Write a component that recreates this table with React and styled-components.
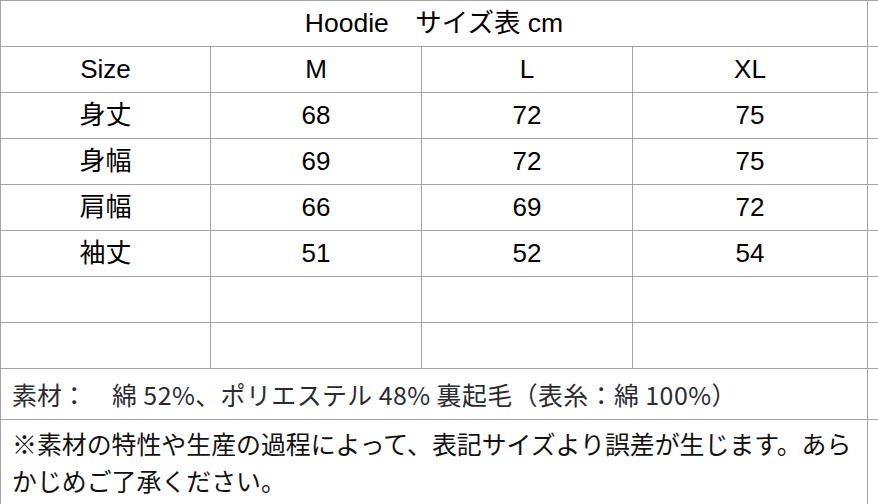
import React from "react";
import styled, { createGlobalStyle } from "styled-components";

const Global = createGlobalStyle`
  html, body { margin: 0; padding: 0; background: #ffffff; }
  body { overflow: hidden; }
  #root { width: 878px; height: 504px; overflow: hidden; }
`;

const LINE = "#a4a4a4";

const Sheet = styled.div`
  display: grid;
  grid-template-columns: 210px 211px 211px 235px 60px;
  grid-template-rows: repeat(8, 46px) 51px 85px 46px;
  border-top: 1px solid ${LINE};
  border-left: 1px solid ${LINE};
  width: max-content;
  box-sizing: border-box;
  font-family: "Liberation Sans", "Noto Sans CJK JP", sans-serif;
  color: #000;
`;

const Cell = styled.div`
  box-sizing: border-box;
  border-right: 1px solid ${LINE};
  border-bottom: 1px solid ${LINE};
  display: flex;
  align-items: center;
  justify-content: center;
  font-size: 26px;
  line-height: 1;
  padding-bottom: 2px;
  grid-column: ${(p) => (p.$span ? `span ${p.$span}` : "auto")};
`;

const Spare = styled.div`
  box-sizing: border-box;
  border-bottom: 1px solid ${LINE};
`;

const Title = styled(Cell)`
  font-size: 26.5px;
  padding-bottom: 0;
`;

const NoteCell = styled.div`
  box-sizing: border-box;
  grid-column: span 4;
  border-right: 1px solid ${LINE};
  border-bottom: 1px solid ${LINE};
  display: flex;
  flex-direction: column;
  justify-content: center;
  padding: 0 0 0 11px;
  font-family: "Noto Sans CJK JP", sans-serif;
  font-size: 24.9px;
  line-height: 37px;
  white-space: nowrap;
  letter-spacing: ${(p) => p.$spacing || "0"};
  color: ${(p) => p.$color || "#111"};
`;

const Label = styled.span`
  display: inline-block;
  width: 100px;
  letter-spacing: 0;
`;

const sizes = ["M", "L", "XL"];
const rows = [
  ["身丈", "68", "72", "75"],
  ["身幅", "69", "72", "75"],
  ["肩幅", "66", "69", "72"],
  ["袖丈", "51", "52", "54"],
  ["", "", "", ""],
  ["", "", "", ""],
];

export default function App() {
  return (
    <>
      <Global />
      <Sheet>
        <Title $span={4}>Hoodie　サイズ表 cm</Title>
        <Spare />
        <Cell>Size</Cell>
        {sizes.map((s) => (
          <Cell key={s}>{s}</Cell>
        ))}
        <Spare />
        {rows.map((r, i) => (
          <React.Fragment key={i}>
            {r.map((v, j) => (
              <Cell key={j}>{v}</Cell>
            ))}
            <Spare />
          </React.Fragment>
        ))}
        <NoteCell $color="#2b2b33" $spacing="0.45px">
          <div>
            <Label>素材：</Label>綿 52%、ポリエステル 48% 裏起毛（表糸：綿 100%）
          </div>
        </NoteCell>
        <Spare />
        <NoteCell>
          <div>※素材の特性や生産の過程によって、表記サイズより誤差が生じます。あら</div>
          <div>かじめご了承ください。</div>
        </NoteCell>
        <Spare />
        <Cell />
        <Cell />
        <Cell />
        <Cell />
        <Spare />
      </Sheet>
    </>
  );
}
